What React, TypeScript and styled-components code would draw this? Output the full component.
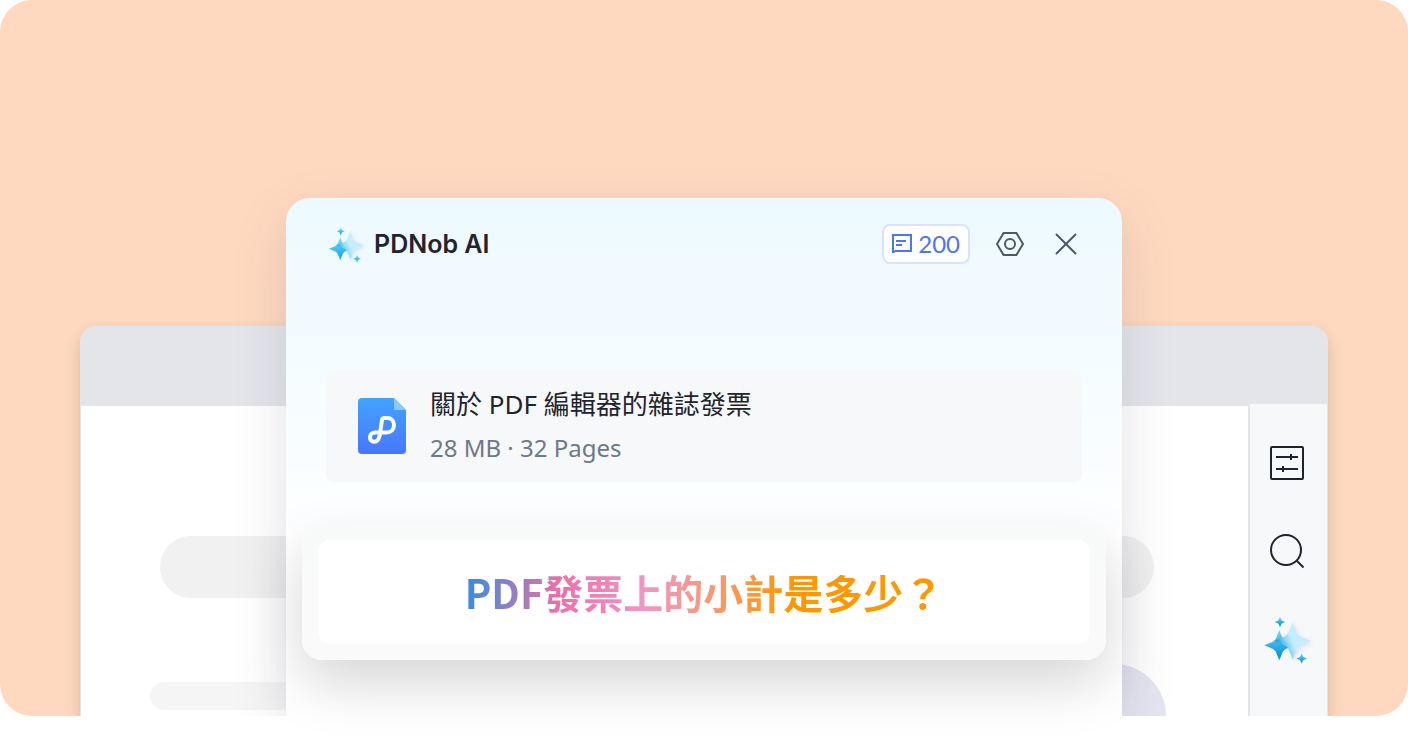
import React, { useId } from "react";
import styled, { createGlobalStyle } from "styled-components";

const GlobalStyle = createGlobalStyle`
  *, *::before, *::after { box-sizing: border-box; }
  body {
    margin: 0;
    background: #fff;
    color: #21242d;
    font-family: "Noto Sans", "Noto Sans CJK TC", sans-serif;
  }
  h1, h2, p { margin: 0; }
`;

const frameGrey = "#e4e5ea";

const Page = styled.main`
  display: grid;
  grid-template-columns: minmax(0, 1fr);
  padding-bottom: 32px;
`;

const Stage = styled.section`
  grid-area: 1 / 1;
  display: grid;
  grid-template-columns: minmax(0, 1fr);
  padding: 0 80px;
  overflow: hidden;
  border-radius: 32px;
  background: #ffd9bf;
`;

const EditorWindow = styled.div`
  grid-area: 1 / 1;
  display: flex;
  flex-direction: column;
  margin-top: 326px;
  border-radius: 16px 16px 0 0;
  background: ${frameGrey};
  box-shadow: 0 8px 16px rgba(60, 30, 20, 0.2);
`;

const TitleBar = styled.div`
  height: 78px;
`;

const EditorBody = styled.div`
  flex: 1;
  display: flex;
  padding: 0 1px;
`;

const DocumentArea = styled.div`
  flex: 1;
  min-width: 0;
  padding-top: 130px;
  border-top: 2px solid ${frameGrey};
  background: #fff;
`;

const HeadingBar = styled.div`
  height: 62px;
  margin: 0 94px 66px 79px;
  border-radius: 32px;
  background: #f1f1f1;
`;

const SkeletonRow = styled.div`
  display: flex;
  justify-content: space-between;
  height: 52px;
  padding: 0 82px 0 69px;
  overflow: hidden;
`;

const LineBar = styled.div`
  width: 60%;
  height: 28px;
  margin-top: 18px;
  border-radius: 14px;
  background: #f5f5f5;
`;

const AvatarDisc = styled.div`
  width: 104px;
  height: 104px;
  border-radius: 50%;
  background: #e5e5f1;
`;

const ToolRail = styled.nav`
  display: flex;
  flex-direction: column;
  align-items: center;
  gap: 40px;
  width: 79px;
  padding: 35px 3px 35px 0;
  border-left: 2px solid ${frameGrey};
  background: #f6f8fa;
`;

const IconButton = styled.button<{ $size: number }>`
  display: grid;
  place-items: center;
  width: ${(p) => p.$size}px;
  height: ${(p) => p.$size}px;
  padding: 0;
  border: 0;
  background: none;
  color: ${(p) => (p.$size > 40 ? "#1f232b" : "#4e5769")};
  cursor: pointer;
  svg { display: block; }
`;

const Panel = styled.section`
  grid-area: 1 / 1;
  justify-self: center;
  z-index: 1;
  width: 100%;
  max-width: 836px;
  margin-top: 198px;
  padding: 26px 40px 234px;
  border-radius: 24px 24px 0 0;
  background: linear-gradient(#ecfaff 0, #f2faff 90px, #f5fcff 170px, #fff 350px);
  box-shadow: 0 20px 56px rgba(30, 30, 70, 0.13);
`;

const PanelHeader = styled.header`
  display: flex;
  align-items: center;
  gap: 24px;
  height: 40px;
  margin-bottom: 106px;
`;

const Brand = styled.div`
  display: flex;
  align-items: center;
  gap: 8px;
  margin-right: auto;
`;

const BrandMark = styled.span`
  display: grid;
  place-items: center;
  width: 40px;
  height: 40px;
`;

const BrandName = styled.h1`
  font: 600 25px/40px Inter, sans-serif;
  color: #21242d;
`;

const CreditButton = styled.button`
  display: flex;
  align-items: center;
  gap: 6px;
  height: 40px;
  padding: 0 8px;
  border: 2px solid #dbe1ff;
  border-radius: 8px;
  background: #fff;
  color: #4776f8;
  font: 400 24px/36px Lato, sans-serif;
  cursor: pointer;
`;

const FileCard = styled.article`
  display: flex;
  align-items: center;
  gap: 24px;
  padding: 16px 32px;
  border-radius: 8px;
  background: #f7f8fa;
`;

const FileText = styled.div`
  display: flex;
  flex-direction: column;
  gap: 8px;
  min-width: 0;
`;

const FileName = styled.h2`
  font: 400 26px/36px "Noto Sans", "Noto Sans CJK TC", sans-serif;
  color: #21242d;
`;

const FileMeta = styled.p`
  font: 400 24px/36px "Noto Sans", sans-serif;
  color: #6d7889;
`;

const QuestionFrame = styled.section`
  grid-area: 1 / 1;
  align-self: end;
  justify-self: center;
  z-index: 2;
  width: calc(100% - 192px);
  max-width: 804px;
  margin-bottom: 56px;
  padding: 16px;
  border-radius: 20px;
  background: linear-gradient(#f7faf9, #fafafa 60%);
  box-shadow: 0 24px 56px rgba(0, 0, 0, 0.16);
`;

const QuestionBox = styled.div`
  display: flex;
  justify-content: center;
  padding: 24px;
  border-radius: 12px;
  background: #fff;
`;

const Question = styled.p`
  font: 700 40px/56px "Noto Sans CJK TC", sans-serif;
  color: transparent;
  background: linear-gradient(
    95deg,
    #318ee0 0%,
    #ec70a9 20%,
    #f196c6 38%,
    #f69985 49%,
    #ff9800 68%
  );
  background-clip: text;
  -webkit-background-clip: text;
`;

/* Four-pointed star with softly rounded inner corners. */
const star = (x: number, y: number, r: number) => {
  const a = r * 0.24;
  const b = r * 0.42;
  const c = r * 0.31;
  return [
    `M${x} ${y - r}L${x + a} ${y - b}Q${x + c} ${y - c} ${x + b} ${y - a}`,
    `L${x + r} ${y}L${x + b} ${y + a}Q${x + c} ${y + c} ${x + a} ${y + b}`,
    `L${x} ${y + r}L${x - a} ${y + b}Q${x - c} ${y + c} ${x - b} ${y + a}`,
    `L${x - r} ${y}L${x - b} ${y - a}Q${x - c} ${y - c} ${x - a} ${y - b}Z`,
  ].join("");
};

function Sparkles({ size, light, deep }: { size: number; light: string; deep: string }) {
  const id = useId();
  return (
    <svg width={size} height={size} viewBox="0 0 48 48" aria-hidden="true" overflow="visible">
      <defs>
        <linearGradient id={`${id}d`} x1="0" y1="0" x2="0" y2="1">
          <stop offset="0.1" stopColor={light} />
          <stop offset="0.8" stopColor={deep} />
        </linearGradient>
        <linearGradient id={`${id}p`} x1="0.1" y1="0.6" x2="0.6" y2="0.4">
          <stop offset="0" stopColor={deep} stopOpacity="0.8" />
          <stop offset="0.3" stopColor={light} stopOpacity="0.9" />
          <stop offset="0.75" stopColor="#c6edfb" />
        </linearGradient>
        <filter id={`${id}s`} x="-30%" y="-30%" width="160%" height="170%">
          <feDropShadow dx="1" dy="2" stdDeviation="2" floodColor="#5470c8" floodOpacity="0.2" />
        </filter>
      </defs>
      <path d={star(16.3, 30.3, 15)} fill={`url(#${id}d)`} />
      <path d={star(29.7, 25.7, 18.5)} fill={`url(#${id}p)`} filter={`url(#${id}s)`} />
      <path d={star(17, 7, 5.2)} fill={`url(#${id}d)`} />
      <path d={star(38.7, 43.5, 5.2)} fill={`url(#${id}d)`} />
    </svg>
  );
}

const SlidersIcon = () => (
  <svg width="36" height="36" viewBox="0 0 36 36" fill="none" stroke="currentColor" strokeWidth="2" aria-hidden="true">
    <rect x="2" y="2" width="32" height="32" rx="1" />
    <path d="M7 12h22M22 9v6M7 24h22M14 21v6" />
  </svg>
);

const SearchIcon = () => (
  <svg width="36" height="36" viewBox="0 0 36 36" fill="none" stroke="currentColor" strokeWidth="2" aria-hidden="true">
    <circle cx="17" cy="17" r="15" />
    <path d="M28 28l6.5 6.5" />
  </svg>
);

const MessageIcon = () => (
  <svg width="20" height="20" viewBox="0 0 20 20" fill="none" stroke="currentColor" strokeWidth="2" aria-hidden="true">
    <path d="M1 19V1h18v16H3.5L1 18.5M4 7h10M4 11h6" />
  </svg>
);

const HexIcon = () => (
  <svg width="28" height="26" viewBox="0 0 28 26" fill="none" stroke="currentColor" strokeWidth="2" aria-hidden="true">
    <path d="M7.6 2h12.8L27 13l-6.6 11H7.6L1 13z" />
    <circle cx="14" cy="13" r="5" />
  </svg>
);

const CloseIcon = () => (
  <svg width="22" height="22" viewBox="0 0 22 22" fill="none" stroke="currentColor" strokeWidth="2" aria-hidden="true">
    <path d="M1 1l20 20M21 1L1 21" />
  </svg>
);

const FileIcon = () => (
  <svg width="48" height="56" viewBox="0 0 48 56" fill="none" aria-hidden="true">
    <defs>
      <linearGradient id="fileFill" x1="0" y1="0" x2="0" y2="1">
        <stop stopColor="#43a3ff" />
        <stop offset="1" stopColor="#4777ff" />
      </linearGradient>
    </defs>
    <path d="M4 0h32l12 12v40a4 4 0 0 1-4 4H4a4 4 0 0 1-4-4V4a4 4 0 0 1 4-4z" fill="url(#fileFill)" />
    <path d="M36 0l12 12H36z" fill="#8cc6ff" />
    <path
      d="M17 34.5H28.5C33 34.5 36 31.5 36 27C36 22.5 33 20 29.5 20H26.5C25 20 24.300 20.500 24 22L21.800 37C21 41.500 19.500 43.800 16 43.800C13.500 43.800 12 41.800 12 39.400C12 36.500 14 34.500 17 34.500Z"
      stroke="#fff"
      strokeWidth="4"
      strokeLinejoin="round"
    />
  </svg>
);

export default function App() {
  return (
    <>
      <GlobalStyle />
      <Page>
        <Stage>
          <EditorWindow>
            <TitleBar />
            <EditorBody>
              <DocumentArea>
                <HeadingBar />
                <SkeletonRow>
                  <LineBar />
                  <AvatarDisc />
                </SkeletonRow>
              </DocumentArea>
              <ToolRail>
                <IconButton $size={48} aria-label="Properties"><SlidersIcon /></IconButton>
                <IconButton $size={48} aria-label="Search"><SearchIcon /></IconButton>
                <IconButton $size={48} aria-label="AI"><Sparkles size={48} light="#6fcbf0" deep="#0b9bdb" /></IconButton>
              </ToolRail>
            </EditorBody>
          </EditorWindow>

          <Panel>
            <PanelHeader>
              <Brand>
                <BrandMark><Sparkles size={36} light="#7adcf8" deep="#1aaef0" /></BrandMark>
                <BrandName>PDNob AI</BrandName>
              </Brand>
              <CreditButton><MessageIcon />200</CreditButton>
              <IconButton $size={32} aria-label="Settings"><HexIcon /></IconButton>
              <IconButton $size={32} aria-label="Close"><CloseIcon /></IconButton>
            </PanelHeader>
            <FileCard>
              <FileIcon />
              <FileText>
                <FileName>關於 PDF 編輯器的雜誌發票</FileName>
                <FileMeta>28 MB · 32 Pages</FileMeta>
              </FileText>
            </FileCard>
          </Panel>
        </Stage>

        <QuestionFrame>
          <QuestionBox>
            <Question>PDF發票上的小計是多少？</Question>
          </QuestionBox>
        </QuestionFrame>
      </Page>
    </>
  );
}
